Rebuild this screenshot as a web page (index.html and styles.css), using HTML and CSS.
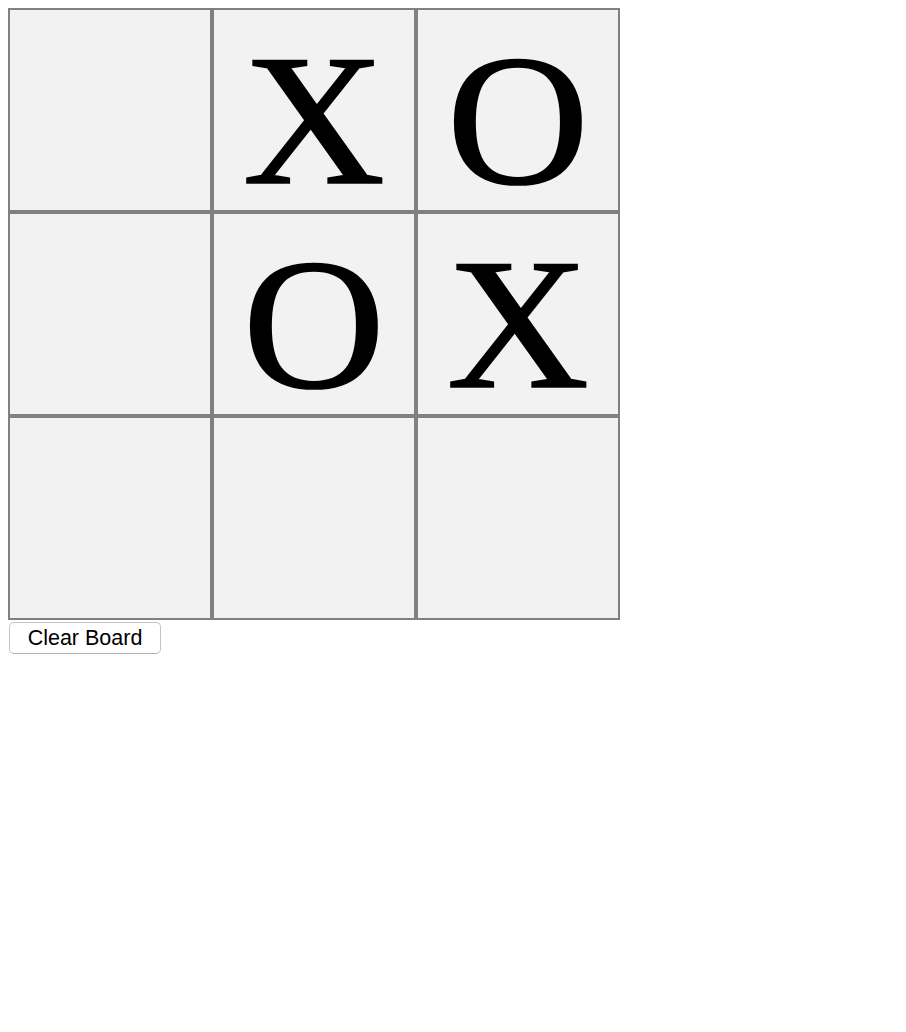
FILE: index.html
```html
<!DOCTYPE html>
<html>
<head>
<meta charset="utf-8">
<title>Tic Tac Toe</title>
<link rel="stylesheet" href="styles.css">
</head>
<body>
<div class="board">
  <div class="cell"></div>
  <div class="cell"><span class="mark">X</span></div>
  <div class="cell"><span class="mark">O</span></div>
  <div class="cell"></div>
  <div class="cell"><span class="mark">O</span></div>
  <div class="cell"><span class="mark">X</span></div>
  <div class="cell"></div>
  <div class="cell"></div>
  <div class="cell"></div>
</div>
<button class="clear">Clear Board</button>
</body>
</html>
```
FILE: styles.css
```css
body {
  margin: 8px;
  background: #ffffff;
  font-family: "Liberation Serif", "Times New Roman", serif;
}
.board {
  display: grid;
  grid-template-columns: repeat(3, 204px);
  grid-auto-rows: 204px;
  width: 612px;
}
.cell {
  box-sizing: border-box;
  width: 204px;
  height: 204px;
  border: 2px solid #808080;
  background: #f2f2f2;
  font-family: "Liberation Serif", "Times New Roman", serif;
  font-size: 197px;
  line-height: 1;
  padding-top: 8px;
  text-align: center;
  overflow: visible;
  color: #000;
}
.mark {
  display: inline-block;
  line-height: 1;
  transform: scaleY(0.95);
  transform-origin: 50% 83.7%;
  -webkit-text-stroke: 1.8px #000;
}
.clear {
  display: block;
  margin: 2px 0 0 1px;
  width: 152px;
  height: 32px;
  padding: 0;
  background: #ffffff;
  border: 1px solid #c4c4c4;
  border-bottom-color: #b4b4b4;
  border-radius: 5px;
  font-family: "Liberation Sans", Arial, sans-serif;
  font-size: 21.5px;
  color: #000;
}
```
